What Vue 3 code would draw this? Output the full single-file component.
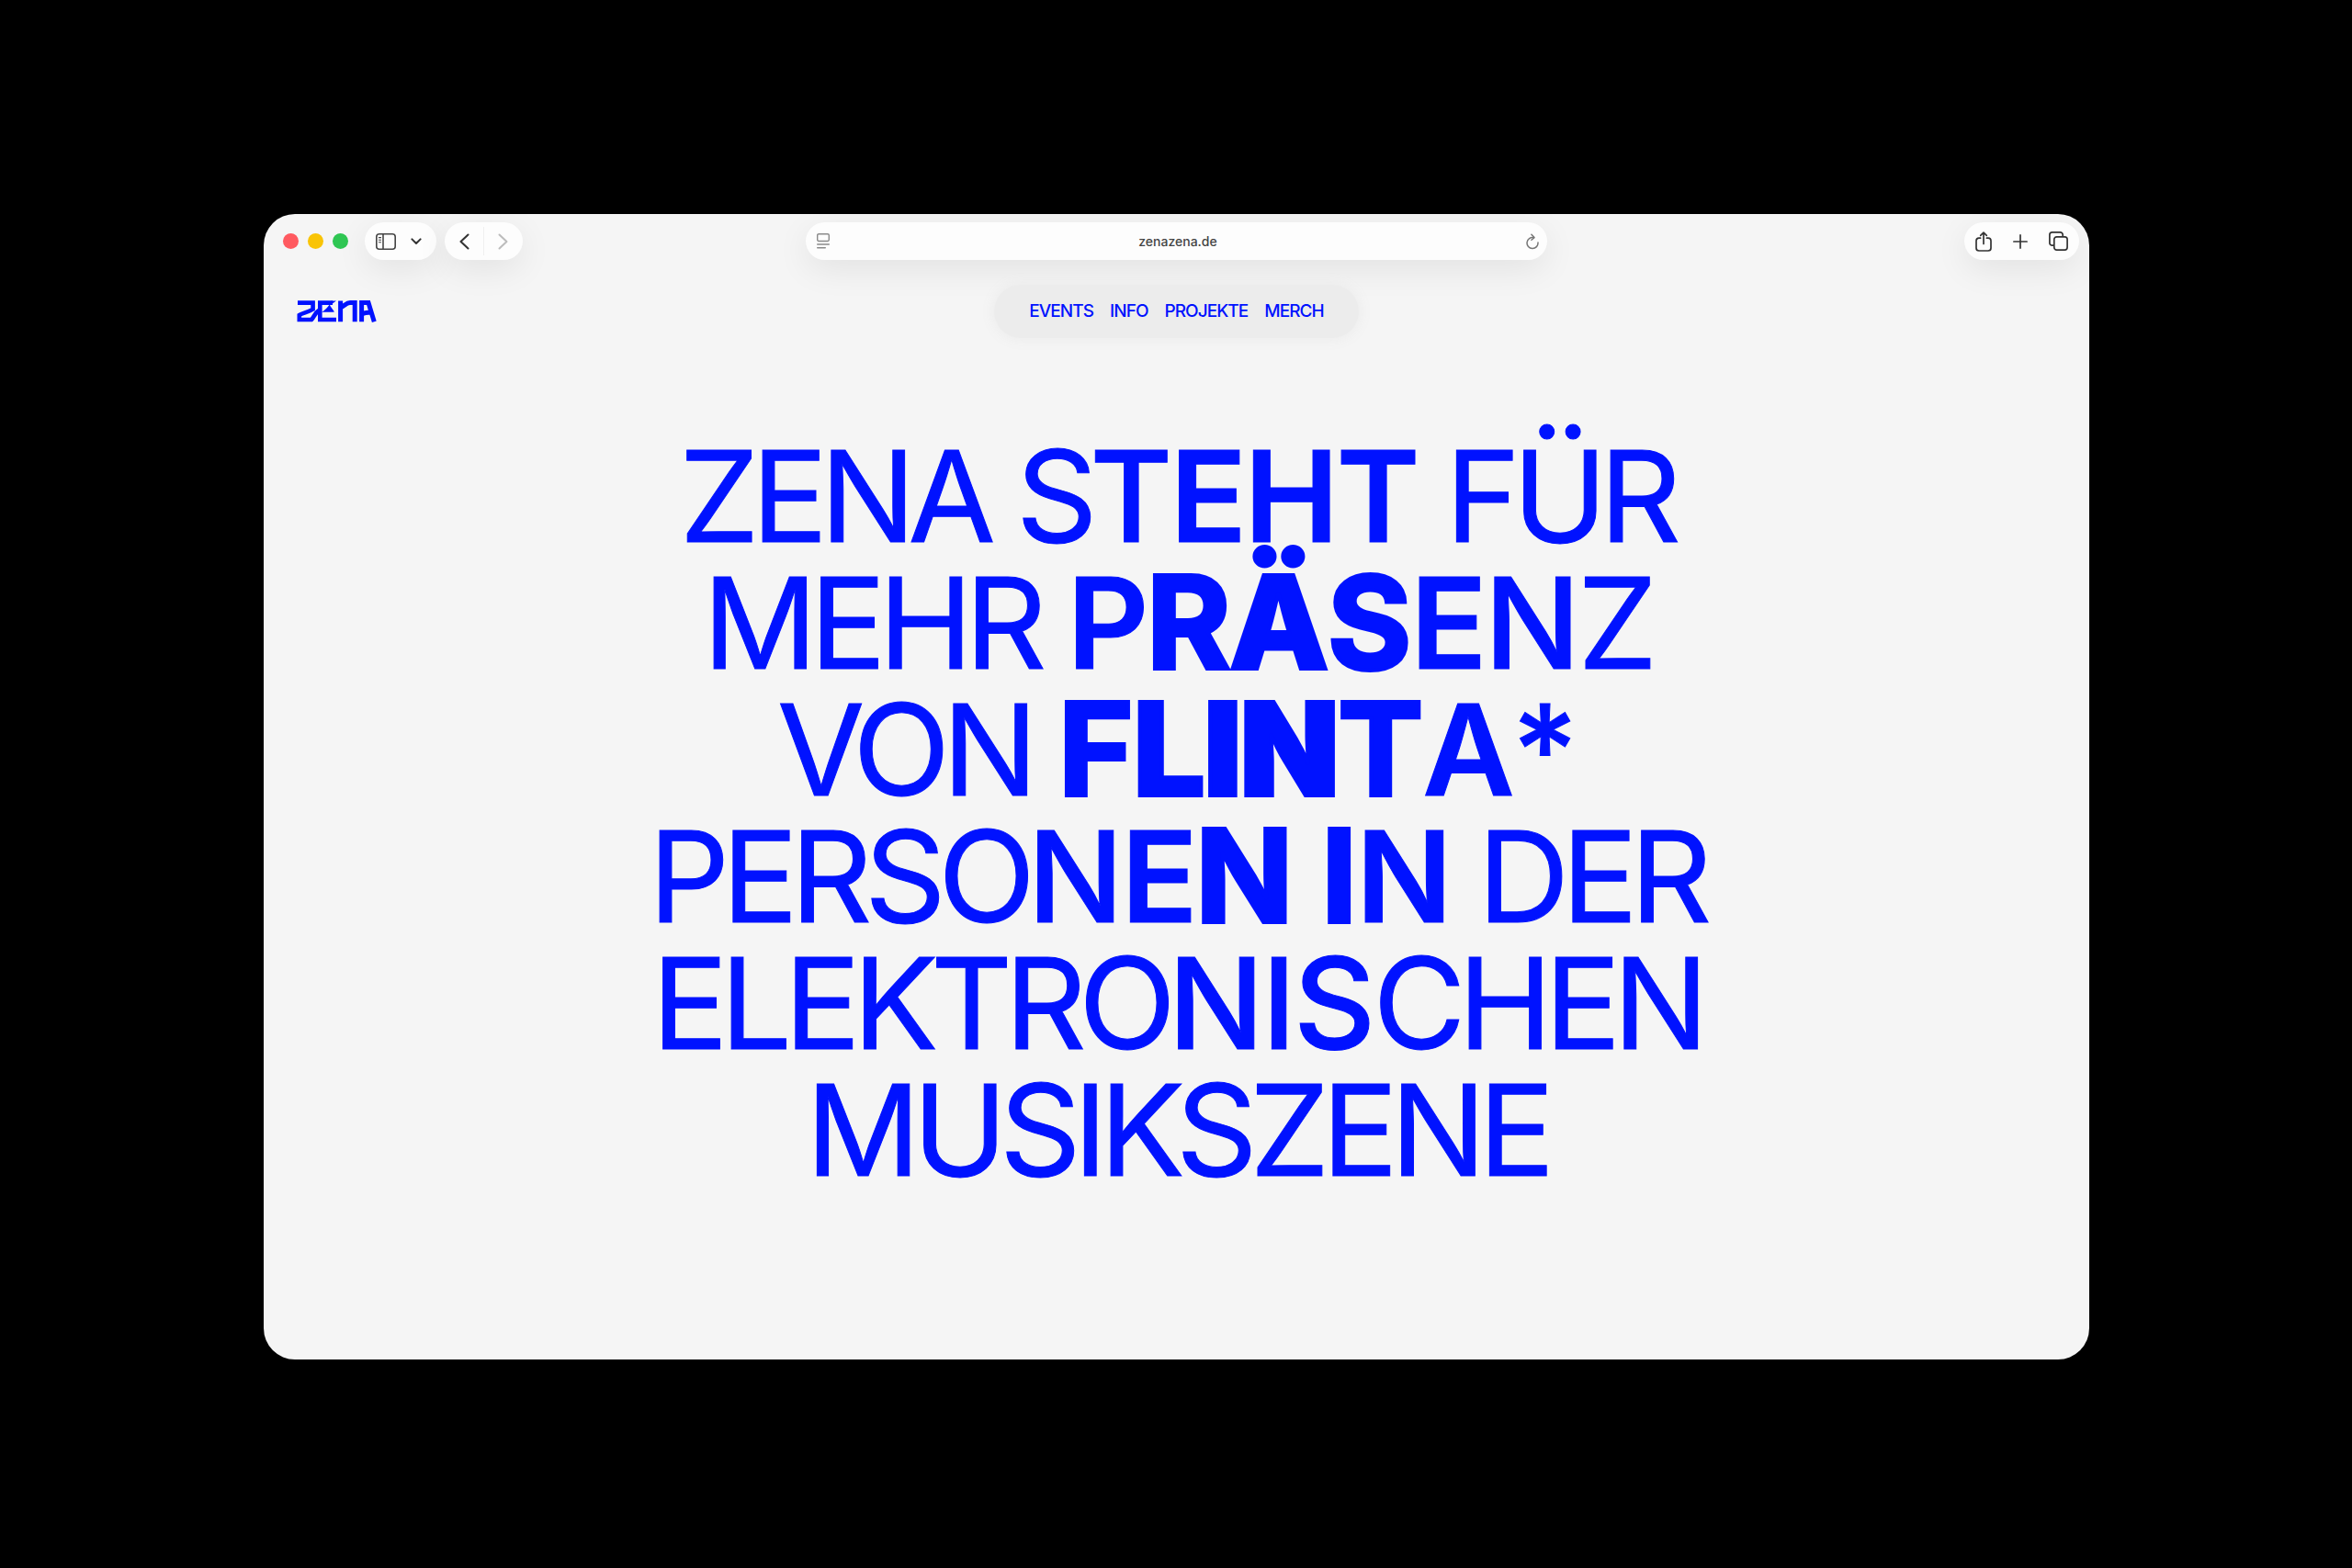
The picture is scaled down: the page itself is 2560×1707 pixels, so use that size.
<script setup>
const navLinks = [
  { label: 'EVENTS', href: '#events' },
  { label: 'INFO', href: '#info' },
  { label: 'PROJEKTE', href: '#projekte' },
  { label: 'MERCH', href: '#merch' },
];

// each run is [text, font weight], heavier towards the middle of the block
const headline = [
  [['ZENA S', 400], ['T', 500], ['EHT', 600], [' FÜR', 400]],
  [['MEHR ', 400], ['P', 600], ['R', 700], ['Ä', 800], ['S', 700], ['E', 600], ['N', 500], ['Z', 400]],
  [['VON ', 400], ['F', 700], ['L', 800], ['IN', 900], ['T', 700], ['A', 600], ['*', 500]],
  [['PERSO', 400], ['N', 500], ['E', 600], ['N', 700], [' I', 700], ['N', 600], [' DER', 400]],
  [['ELEKTRO', 400], ['NIS', 500], ['CHEN', 400]],
  [['MUSIKSZENE', 400]],
];

const runClass = (weight) => {
  if (weight >= 700) return 'heavy';
  if (weight >= 500) return 'medium';
  return 'plain';
};
</script>

<template>
  <div class="stage">
    <div class="window">
      <header class="toolbar">
        <div class="toolbar-left">
          <div class="lights">
            <button class="light red" aria-label="Close"></button>
            <button class="light yellow" aria-label="Minimize"></button>
            <button class="light green" aria-label="Zoom"></button>
          </div>
          <div class="pill sidebar-pill">
            <button class="tool" aria-label="Sidebar">
              <svg width="22" height="18" viewBox="0 0 22 18" fill="none" stroke="#444" stroke-width="1.6">
                <rect x="0.8" y="0.8" width="20.4" height="16.4" rx="3" />
                <path d="M8 1v16" />
                <path d="M3 4.6h3M3 7.2h3M3 9.8h3" stroke-width="1.1" />
              </svg>
            </button>
            <button class="tool" aria-label="Tab groups">
              <svg width="12" height="8" viewBox="0 0 12 8" fill="none" stroke="#333" stroke-width="2" stroke-linecap="round" stroke-linejoin="round">
                <path d="M1.4 1.4 6 6l4.6-4.6" />
              </svg>
            </button>
          </div>
          <div class="pill history-pill">
            <button class="tool" aria-label="Back">
              <svg width="11" height="18" viewBox="0 0 11 18" fill="none" stroke="#333" stroke-width="2" stroke-linecap="round" stroke-linejoin="round">
                <path d="M9.5 1.5 1.5 9l8 7.5" />
              </svg>
            </button>
            <span class="divider"></span>
            <button class="tool" aria-label="Forward">
              <svg width="11" height="18" viewBox="0 0 11 18" fill="none" stroke="#bcbcbc" stroke-width="2" stroke-linecap="round" stroke-linejoin="round">
                <path d="m1.5 1.5 8 7.5-8 7.5" />
              </svg>
            </button>
          </div>
        </div>

        <div class="pill address">
          <button class="tool" aria-label="Reader">
            <svg width="14" height="17" viewBox="0 0 14 17" fill="none" stroke="#8a8a8a" stroke-width="1.4" stroke-linecap="round">
              <rect x="0.7" y="0.7" width="12.6" height="7.8" rx="1.4" />
              <path d="M0.7 12h12.6M0.7 15.8h8.6" />
            </svg>
          </button>
          <input class="url" type="text" value="zenazena.de" aria-label="Address" />
          <button class="tool" aria-label="Reload">
            <svg width="14" height="18" viewBox="0 0 14 18" fill="none" stroke="#777" stroke-width="1.5" stroke-linecap="round" stroke-linejoin="round">
              <path d="M8.4 4.7A6 6 0 1 0 13 10" />
              <path d="M5.9 1.2 9 4.6 5.9 7.2" />
            </svg>
          </button>
        </div>

        <div class="toolbar-right">
          <div class="pill actions-pill">
            <button class="tool" aria-label="Share">
              <svg width="18" height="22" viewBox="0 0 18 22" fill="none" stroke="#333" stroke-width="1.7" stroke-linecap="round" stroke-linejoin="round">
                <path d="M5.6 7.2H4A3 3 0 0 0 1 10.2V18a3 3 0 0 0 3 3h10a3 3 0 0 0 3-3v-7.8a3 3 0 0 0-3-3h-1.6" />
                <path d="M9 13.5V1.2M5.7 4.3 9 1.1l3.3 3.2" />
              </svg>
            </button>
            <button class="tool" aria-label="New tab">
              <svg width="16" height="16" viewBox="0 0 16 16" fill="none" stroke="#333" stroke-width="1.7" stroke-linecap="round">
                <path d="M8 0.9v14.2M0.9 8h14.2" />
              </svg>
            </button>
            <button class="tool" aria-label="Tab overview">
              <svg width="21" height="21" viewBox="0 0 21 21" fill="none" stroke="#333" stroke-width="1.7">
                <path d="M5.8 15.2H3.7a2.8 2.8 0 0 1-2.8-2.8V3.7A2.8 2.8 0 0 1 3.7 0.9h8.7a2.8 2.8 0 0 1 2.8 2.8v2.1" />
                <rect x="5.8" y="5.8" width="14.3" height="14.3" rx="2.8" />
              </svg>
            </button>
          </div>
        </div>
      </header>

      <div class="site-bar">
        <a class="logo" href="#" aria-label="ZENA">
          <svg width="87" height="24" viewBox="0 0 87 24" fill="none" stroke="#0012ff" stroke-width="4.6">
            <path d="M1 2.6H17.6V9.6C12 13 7 13.5 2.8 16V21H16C19 18 19.5 14 24 11" />
            <path d="M43 21H25.3V2.6H39" />
            <path d="M38 0.4H43L36 5.5 41 12.5C36 13.5 32 12 27 13 31 10 34 8 38 0.4Z" fill="#0012ff" stroke="none" />
            <path d="M47.6 23.2V0.4M47.6 8C52 6 54 2.6 58 2.6H63.2V23.2" stroke-width="5" />
            <path d="M70.6 23.2V2.6H78L84.3 23.2M70.6 15.5C73 13.5 76 13 81 13" stroke-width="5" />
          </svg>
        </a>
        <nav class="site-nav">
          <a v-for="link in navLinks" :key="link.label" :href="link.href">{{ link.label }}</a>
        </nav>
      </div>

      <main class="hero">
        <h1 class="headline">
          <span v-for="(runs, i) in headline" :key="i" class="line">
            <span
              v-for="([text, weight], j) in runs"
              :key="j"
              :class="runClass(weight)"
              :style="{ fontWeight: weight }"
            >{{ text }}</span>
          </span>
        </h1>
      </main>
    </div>
  </div>
</template>

<style>
body {
  margin: 0;
  background: #000;
}
</style>

<style scoped>
.stage {
  box-sizing: border-box;
  min-height: 100vh;
  padding: 233px 286px 227px 287px;
  display: flex;
  background: #000;
  font-family: Inter, "Liberation Sans", sans-serif;
}

.window {
  flex: 1;
  display: flex;
  flex-direction: column;
  border-radius: 34px;
  overflow: hidden;
  background: #f5f5f5;
}

/* browser toolbar */
.toolbar {
  display: grid;
  grid-template-columns: 1fr minmax(320px, 807px) 1fr;
  align-items: center;
  padding: 9px 11px 0;
}

.toolbar-left {
  display: flex;
  align-items: center;
  gap: 9px;
}

.toolbar-right {
  display: flex;
  justify-content: flex-end;
}

.lights {
  display: flex;
  gap: 10px;
  padding: 0 9px 0 10px;
}

.light {
  width: 17px;
  height: 17px;
  padding: 0;
  border: none;
  border-radius: 50%;
}

.red {
  background: #ff5a60;
}

.yellow {
  background: #f9c406;
}

.green {
  background: #2fc653;
}

.pill {
  box-sizing: border-box;
  height: 41px;
  display: flex;
  align-items: center;
  border-radius: 21px;
  background: #fdfdfd;
  box-shadow: 0 10px 36px rgba(0, 0, 0, 0.08);
}

.tool {
  display: flex;
  padding: 0;
  border: none;
  background: none;
  cursor: pointer;
}

.sidebar-pill {
  padding: 0 16px 0 12px;
  gap: 16px;
}

.history-pill {
  padding: 0 16px;
  gap: 15px;
}

.divider {
  width: 1px;
  height: 31px;
  background: #efefef;
}

.address {
  padding: 0 9px 0 12px;
}

.url {
  flex: 1;
  min-width: 0;
  padding: 0;
  border: none;
  outline: none;
  background: none;
  text-align: center;
  font-family: inherit;
  font-size: 14px;
  font-weight: 500;
  color: #444;
}

.actions-pill {
  padding: 0 12px;
  gap: 23px;
}

/* site header */
.site-bar {
  display: grid;
  grid-template-columns: 1fr auto 1fr;
  align-items: center;
  padding: 27px 36px 0;
}

.logo {
  display: flex;
}

.site-nav {
  display: flex;
  gap: 18px;
  padding: 17px 38px;
  border-radius: 29px;
  background: #ececec;
  box-shadow: 0 0 14px 2px #ececec;
}

.site-nav a {
  color: #0012ff;
  font-size: 19px;
  font-weight: 500;
  line-height: 24px;
  letter-spacing: -0.05em;
  text-decoration: none;
}

/* headline */
.hero {
  flex: 1;
  padding: 103px 40px 0;
}

.headline {
  margin: 0;
  color: #0012ff;
  font-size: 138px;
  line-height: 138px;
  letter-spacing: -0.06em;
  text-align: center;
  -webkit-text-stroke: 1px #0012ff;
}

.line {
  display: block;
  white-space: pre;
}

/* emphasised letters are set less tightly, the heaviest get a thick outline */
.medium {
  letter-spacing: -0.02em;
}

.heavy {
  font-size: 140px;
  line-height: 0;
  letter-spacing: -0.01em;
  -webkit-text-stroke: 4px #0012ff;
}
</style>
